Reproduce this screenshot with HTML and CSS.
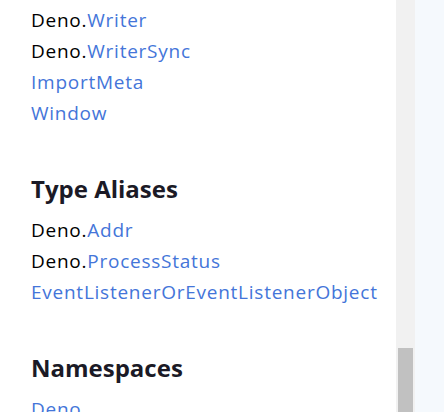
FILE: index.html
```html
<!DOCTYPE html>
<html>
<head>
<meta charset="utf-8">
<link rel="stylesheet" href="styles.css">
</head>
<body>
<div class="page">
  <main class="panel">
    <section class="group">
      <ul class="list">
        <li><span class="ns">Deno.</span><a class="link">Writer</a></li>
        <li><span class="ns">Deno.</span><a class="link">WriterSync</a></li>
        <li><a class="link">ImportMeta</a></li>
        <li><a class="link">Window</a></li>
      </ul>
    </section>
    <section class="group">
      <h2 class="heading">Type Aliases</h2>
      <ul class="list">
        <li><span class="ns">Deno.</span><a class="link">Addr</a></li>
        <li><span class="ns">Deno.</span><a class="link">ProcessStatus</a></li>
        <li><a class="link">EventListenerOrEventListenerObject</a></li>
      </ul>
    </section>
    <section class="group">
      <h2 class="heading">Namespaces</h2>
      <ul class="list">
        <li><a class="link">Deno</a></li>
      </ul>
    </section>
  </main>
  <div class="scrollbar"><div class="thumb"></div></div>
  <aside class="side"></aside>
</div>
</body>
</html>
```
FILE: styles.css
```css
html, body {
  margin: 0;
  padding: 0;
  height: 412px;
  overflow: hidden;
  background: #ffffff;
}
.page {
  display: flex;
  height: 412px;
  font-family: "Open Sans", "Noto Sans", sans-serif;
}
.panel {
  width: 396px;
  flex: none;
  box-sizing: border-box;
  padding: 5px 0 0 31px;
  background: #ffffff;
  overflow: hidden;
}
.group + .group {
  margin-top: 44px;
}
.heading {
  margin: 0 0 10px 0;
  font-size: 24px;
  line-height: 32px;
  font-weight: 700;
  color: #1b1a26;
}
.list {
  list-style: none;
  margin: 0;
  padding: 0;
}
.list li {
  font-size: 19px;
  letter-spacing: 0.75px;
  line-height: 31px;
  white-space: nowrap;
}
.ns {
  color: #000000;
}
.link {
  color: #4475d9;
  text-decoration: none;
}
.scrollbar {
  width: 19px;
  flex: none;
  background: #f1f1f1;
  display: flex;
  flex-direction: column;
}
.thumb {
  margin: auto 2px 0 2px;
  height: 64px;
  background: #c1c1c1;
}
.side {
  flex: 1;
  background: #f5f9fd;
}
```
